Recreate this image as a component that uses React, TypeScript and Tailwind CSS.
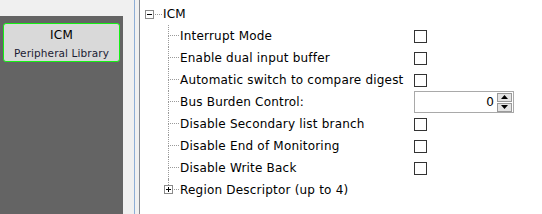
import React from "react";

const font = { fontFamily: '"DejaVu Sans", Verdana, sans-serif' };

const items = [
  { label: "Interrupt Mode", kind: "check" },
  { label: "Enable dual input buffer", kind: "check" },
  { label: "Automatic switch to compare digest", kind: "check" },
  { label: "Bus Burden Control:", kind: "spin" },
  { label: "Disable Secondary list branch", kind: "check" },
  { label: "Disable End of Monitoring", kind: "check" },
  { label: "Disable Write Back", kind: "check" },
];

function Checkbox() {
  return <div className="w-[13px] h-[13px] border border-[#333333] bg-white" />;
}

function Spinner() {
  return (
    <div className="flex h-[22px] w-[100px] items-center border border-[#a9a9a9] bg-white">
      <div className="flex-1 pr-[3px] text-right text-[12px] text-black">0</div>
      <div className="mr-px flex w-[15px] flex-col gap-px">
        <div className="flex h-[9px] items-center justify-center border border-[#9a9a9a] bg-[#e4e4e4]">
          <svg width="7" height="4" viewBox="0 0 7 4">
            <path d="M3.5 0 L7 4 L0 4 Z" fill="#000" />
          </svg>
        </div>
        <div className="flex h-[9px] items-center justify-center border border-[#9a9a9a] bg-[#e4e4e4]">
          <svg width="7" height="4" viewBox="0 0 7 4">
            <path d="M0 0 L7 0 L3.5 4 Z" fill="#000" />
          </svg>
        </div>
      </div>
    </div>
  );
}

function ExpandBox({ open }: { open: boolean }) {
  return (
    <div className="relative h-[9px] w-[9px] border border-[#8a8a8a] bg-white">
      <div className="absolute left-[1px] top-[3px] h-px w-[5px] bg-black" />
      {!open && <div className="absolute left-[3px] top-[1px] h-[5px] w-px bg-black" />}
    </div>
  );
}

export default function App() {
  return (
    <div className="flex h-[214px] w-[542px] overflow-hidden bg-[#f0f0f0] text-[12px] text-black tracking-[0.2px]" style={font}>
      {/* left palette */}
      <div className="flex w-[134px] flex-col">
        <div className="mt-[16px] w-[123px] flex-1 bg-[#646464] pl-[3px] pt-[7px]">
          <div className="flex h-[39px] w-[117px] flex-col items-center rounded-[3px] border border-[#14f014] bg-[#d9d9d9]">
            <div className="mt-[3px] text-[12px] leading-[16px] text-black">ICM</div>
            <div className="mt-[3px] text-[10.5px] leading-[14px] tracking-[0.1px] text-[#1c1c34]">Peripheral Library</div>
          </div>
        </div>
      </div>
      <div className="w-px bg-[#8eaed6]" />
      <div className="w-[4px]" />
      <div className="w-px bg-[#868b93]" />

      {/* property tree */}
      <div className="flex-1 bg-white pt-[3px]">
        <div className="flex h-[22px] items-center pl-[5px]">
          <ExpandBox open />
          <div className="ml-px w-[7px] border-b border-dotted border-[#9a9a9a]" />
          <span className="ml-px">ICM</span>
        </div>
        <div className="ml-[28px]">
          {items.map((it) => (
            <div key={it.label} className="flex h-[22px]">
              <div className="flex w-[11px] flex-col">
                <div className="h-[11px] border-b border-l border-dotted border-[#9a9a9a]" />
                <div className="flex-1 border-l border-dotted border-[#9a9a9a]" />
              </div>
              <div className="ml-px flex flex-1 items-center">
                <span className="w-[234px]">{it.label}</span>
                {it.kind === "check" ? <Checkbox /> : <Spinner />}
              </div>
            </div>
          ))}
          <div className="flex h-[22px]">
            <div className="ml-[-4px] flex w-[9px] flex-col items-center">
              <div className="h-[6px] border-l border-dotted border-[#9a9a9a]" />
              <ExpandBox open={false} />
            </div>
            <div className="mt-[10px] ml-px h-px w-[5px] border-b border-dotted border-[#9a9a9a]" />
            <span className="ml-px self-center">Region Descriptor (up to 4)</span>
          </div>
        </div>
      </div>
    </div>
  );
}
